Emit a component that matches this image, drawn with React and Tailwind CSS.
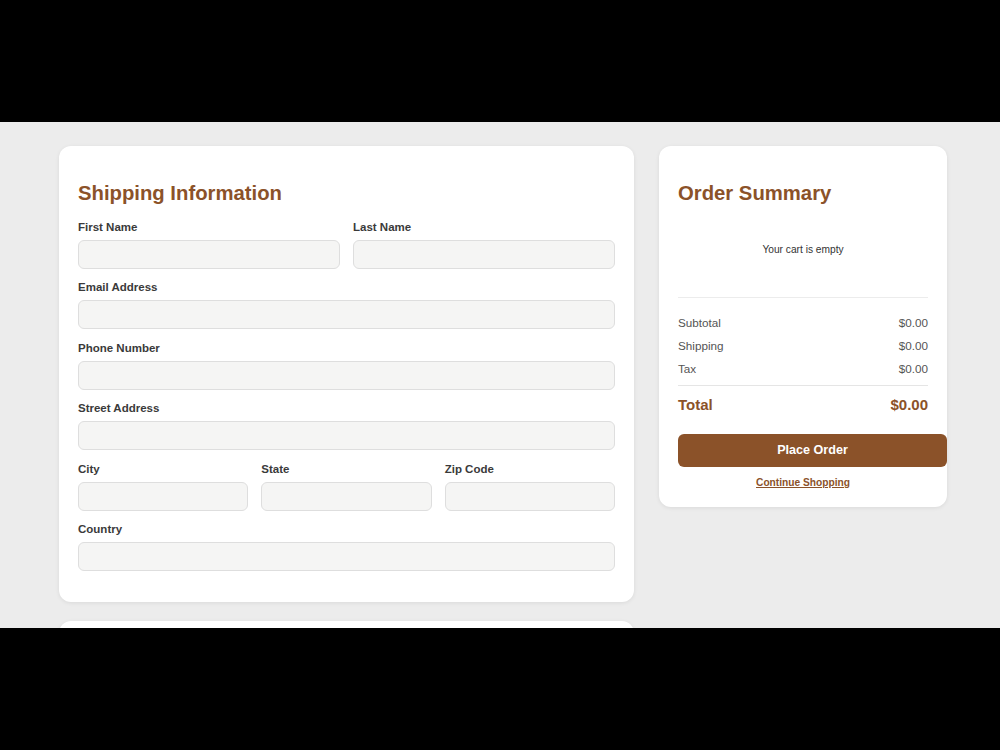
function Field({ label }) {
  return (
    <div className="flex flex-col mb-[11.4px]">
      <label className="text-[11.5px] leading-[14px] font-bold text-[#3a3a3a] mb-[6px]">{label}</label>
      <input
        type="text"
        className="h-[29px] w-full rounded-[6px] border border-[#dedede] bg-[#f5f5f4] px-2 outline-none"
      />
    </div>
  );
}

function SummaryRow({ label, value }) {
  return (
    <div className="flex justify-between text-[11.7px] leading-[23px] text-[#555]">
      <span>{label}</span>
      <span>{value}</span>
    </div>
  );
}

export default function App() {
  return (
    <div
      className="h-screen flex flex-col bg-black overflow-hidden"
      style={{ fontFamily: '"Liberation Sans", Arial, sans-serif' }}
    >
      <div className="h-[122px] shrink-0 bg-black" />
      <div className="flex-1 bg-[#ececec] overflow-hidden">
        <div className="ml-[59px] pt-[24px] flex items-start gap-[25px]">
          <div className="w-[575px] flex flex-col gap-[19px]">
            <div className="bg-white rounded-[12px] shadow-[0_1px_4px_rgba(0,0,0,0.08)] px-[19px] pt-[33px] pb-[20px]">
              <h2 className="text-[20.3px] leading-[28px] font-bold text-[#8b5229] mb-[13px]">
                Shipping Information
              </h2>
              <div className="grid grid-cols-2 gap-x-[13px]">
                <Field label="First Name" />
                <Field label="Last Name" />
              </div>
              <Field label="Email Address" />
              <Field label="Phone Number" />
              <Field label="Street Address" />
              <div className="grid grid-cols-3 gap-x-[13px]">
                <Field label="City" />
                <Field label="State" />
                <Field label="Zip Code" />
              </div>
              <Field label="Country" />
            </div>
            <div className="bg-white rounded-[12px] h-[200px] shadow-[0_1px_4px_rgba(0,0,0,0.08)]" />
          </div>

          <div className="w-[288px] bg-white rounded-[12px] shadow-[0_1px_4px_rgba(0,0,0,0.08)] px-[19px] pt-[33px] pb-[17px]">
            <h2 className="text-[20.3px] leading-[28px] font-bold text-[#8b5229]">Order Summary</h2>
            <div className="pt-[36px] pb-[40px] border-b border-[#ececec] text-center text-[10.2px] leading-[14px] text-[#333]">
              Your cart is empty
            </div>
            <div className="pt-[13px] pb-[5px] border-b border-[#e5e5e5]">
              <SummaryRow label="Subtotal" value="$0.00" />
              <SummaryRow label="Shipping" value="$0.00" />
              <SummaryRow label="Tax" value="$0.00" />
            </div>
            <div className="flex justify-between pt-[9px] text-[15px] leading-[20px] font-bold text-[#8b5229]">
              <span>Total</span>
              <span>$0.00</span>
            </div>
            <button className="mt-[19px] h-[33px] w-[calc(100%+19px)] rounded-[6px] bg-[#8b5229] text-white text-[12.6px] font-bold">
              Place Order
            </button>
            <div className="mt-[7px] text-center leading-[14px]">
              <a href="#" className="text-[10.2px] font-bold text-[#8b5229] underline">
                Continue Shopping
              </a>
            </div>
          </div>
        </div>
      </div>
      <div className="h-[122px] shrink-0 bg-black" />
    </div>
  );
}
